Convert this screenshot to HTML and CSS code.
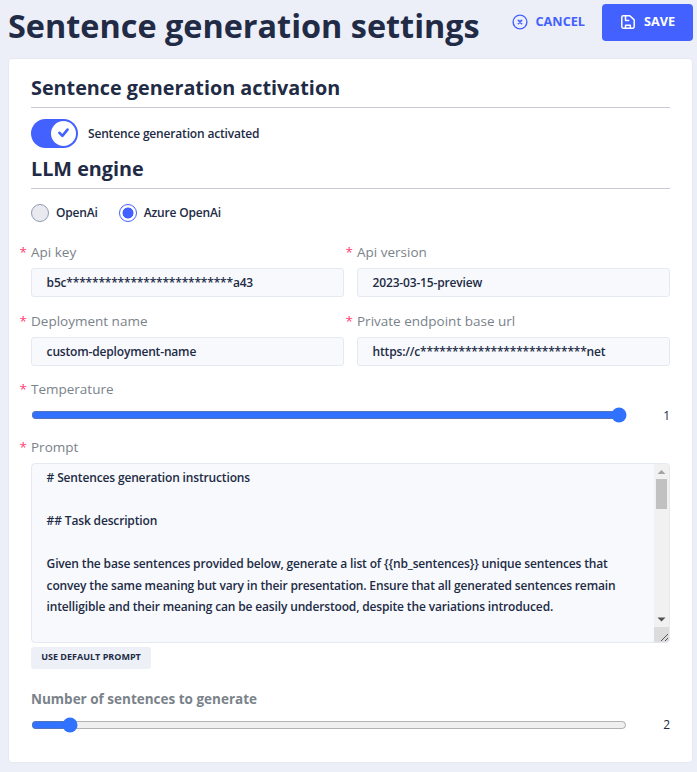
FILE: index.html
```html
<!DOCTYPE html>
<html lang="en">
<head>
<meta charset="utf-8">
<title>Sentence generation settings</title>
<link rel="stylesheet" href="styles.css">
</head>
<body>
<header class="page-header">
  <h1>Sentence generation settings</h1>
  <div class="actions">
    <button class="btn btn-cancel" type="button">
      <svg width="16" height="16" viewBox="0 0 16 16" fill="none" stroke="currentColor" stroke-width="1.4" stroke-linecap="round"><circle cx="8" cy="8" r="6.900"/><path d="M6.400 6.400l3.200 3.200M9.600 6.400L6.400 9.600" stroke-width="1.600"/></svg>
      <span>Cancel</span>
    </button>
    <button class="btn btn-save" type="button">
      <svg width="14" height="14" viewBox="0 0 14 14" fill="none" stroke="currentColor" stroke-width="1.5" stroke-linejoin="round" stroke-linecap="round"><path d="M2.200.8h6.600l4.400 4.100v6.900a1.400 1.400 0 0 1-1.400 1.400H2.200A1.400 1.400 0 0 1 .8 11.800V2.200A1.400 1.400 0 0 1 2.200.8z"/><path d="M4.500 1v4.500h3.200M4.500 13v-2.700h4.800V13"/></svg>
      <span>Save</span>
    </button>
  </div>
</header>
<main class="card">
  <h2>Sentence generation activation</h2>
  <div class="toggle-row">
    <span class="toggle"><span class="knob"><svg width="12" height="12" viewBox="0 0 12 12" fill="none" stroke="currentColor" stroke-width="2.600" stroke-linecap="round" stroke-linejoin="round"><path d="M1.500 4.800l2.900 3L9.500 1.600"/></svg></span></span>
    <span class="toggle-text">Sentence generation activated</span>
  </div>
  <h2 class="second">LLM engine</h2>
  <div class="radios">
    <label class="radio"><span class="dot"></span><span class="radio-text">OpenAi</span></label>
    <label class="radio"><span class="dot checked"></span><span class="radio-text">Azure OpenAi</span></label>
  </div>
  <div class="fields">
    <div class="field"><label class="label required">Api key</label><div class="input">b5c**************************a43</div></div>
    <div class="field"><label class="label required">Api version</label><div class="input">2023-03-15-preview</div></div>
    <div class="field"><label class="label required">Deployment name</label><div class="input">custom-deployment-name</div></div>
    <div class="field"><label class="label required">Private endpoint base url</label><div class="input">https://c**************************net</div></div>
  </div>
  <label class="label required temperature">Temperature</label>
  <div class="slider"><input type="range" min="0" max="1" step="0.1" value="1"><span class="value">1</span></div>
  <label class="label required prompt-label">Prompt</label>
  <div class="textarea">
    <div class="prompt-text"># Sentences generation instructions

## Task description

Given the base sentences provided below, generate a list of {{nb_sentences}} unique sentences that convey the same meaning but vary in their presentation. Ensure that all generated sentences remain intelligible and their meaning can be easily understood, despite the variations introduced.</div>
    <div class="scrollbar">
      <svg class="arrow" width="15" height="15" viewBox="0 0 15 15"><path d="M3.500 10L7.500 6l4 4z" fill="#a3a3a3"/></svg>
      <span class="thumb"></span>
      <svg class="arrow down" width="15" height="15" viewBox="0 0 15 15"><path d="M3.500 5.500l4 4 4-4z" fill="#505050"/></svg>
      <svg class="grip" width="15" height="15" viewBox="0 0 15 15" shape-rendering="crispEdges" stroke="#555" stroke-width="1"><path d="M7 14l7-7M11 14l3-3"/></svg>
    </div>
  </div>
  <button class="default-btn" type="button">Use default prompt</button>
  <label class="label strong">Number of sentences to generate</label>
  <div class="slider count"><input type="range" min="1" max="20" value="2"><span class="value">2</span></div>
</main>
</body>
</html>
```
FILE: styles.css
```css
* { box-sizing: border-box; }
body {
  margin: 0;
  height: 772px;
  overflow: hidden;
  padding: 4px 4px 0 8px;
  background: #eceff8;
  color: #222b45;
  font-family: "Open Sans", sans-serif;
  font-size: 12px;
  font-weight: 600;
  letter-spacing: -.17px;
}
button { font-family: inherit; border: 0; letter-spacing: 0; }
h1, h2 { margin: 0; font-weight: 700; letter-spacing: 0; }
h1 { font-size: 32.4px; line-height: 42px; white-space: nowrap; }
.page-header { display: flex; justify-content: space-between; height: 54px; }
.actions { display: flex; gap: 17px; height: 37px; }
.btn {
  display: flex;
  align-items: center;
  padding: 0;
  border-radius: 4px;
  background: transparent;
  font-size: 12.7px;
  font-weight: 700;
  text-transform: uppercase;
}
.btn svg { margin-top: -1px; }
.btn span { padding-bottom: 3px; }
.btn-cancel { gap: 7px; color: #4361ff; }
.btn-save { width: 91px; padding-left: 19px; gap: 9px; background: #4361ff; color: #fff; }
.card {
  width: 685px;
  height: 705px;
  padding: 17px 22px 0;
  background: #fff;
  border: 1px solid #e4e9f5;
  border-radius: 4px;
}
h2 { height: 32px; line-height: 24px; font-size: 19.8px; border-bottom: 1px solid #c8cbd5; }
.toggle-row { display: flex; align-items: center; gap: 10px; height: 29px; margin-top: 11px; }
.toggle { display: flex; justify-content: flex-end; width: 47px; height: 29px; padding: 2px; border-radius: 15px; background: #4361ff; }
.knob { display: flex; align-items: center; justify-content: center; width: 25px; height: 25px; border-radius: 50%; background: #fff; color: #4361ff; }
.second { margin-top: 9px; }
.radios { display: flex; gap: 21px; margin-top: 15px; height: 18px; }
.radio { display: flex; align-items: center; gap: 7px; }
.radio-text { padding-bottom: 2px; }
.dot { width: 18px; height: 18px; border: 1px solid #8f9bb3; border-radius: 50%; background: #e9eaef; }
.dot.checked { border-color: #4361ff; background: radial-gradient(circle, #4361ff 5.200px, #fff 5.800px); }
.fields { display: grid; grid-template-columns: 1fr 1fr; column-gap: 13px; row-gap: 13px; margin-top: 21px; }
.field { height: 56px; }
.label { display: block; height: 18px; line-height: 18px; font-size: 13.5px; font-weight: 400; letter-spacing: 0; color: #7a828a; }
.required { position: relative; }
.required::before { content: "*"; position: absolute; left: -11.5px; color: #ff3d71; }
.input {
  height: 29px;
  margin-top: 7px;
  padding-left: 14.6px;
  border: 1px solid #e4e9f2;
  border-radius: 3px;
  background: #f7f9fc;
  line-height: 27px;
}
.temperature { margin-top: 12px; }
.slider { display: flex; align-items: center; justify-content: space-between; height: 16px; margin-top: 9px; }
.slider input { width: 596px; height: 16px; margin: -1px 0 0; accent-color: #3071ff; }
.value { font-weight: 400; }
.count .value { padding-bottom: 2px; }
.prompt-label { margin-top: 15px; }
.textarea { display: flex; justify-content: space-between; height: 180px; margin-top: 7px; border: 1px solid #e4e9f2; border-radius: 4px; background: #f7f9fc; overflow: hidden; }
.prompt-text { width: 600px; padding: 3px 0 0 14.6px; line-height: 21.500px; letter-spacing: -.152px; white-space: pre-wrap; }
.scrollbar { display: flex; flex-direction: column; align-items: center; width: 15px; background: #f1f1f1; }
.arrow, .grip { flex: none; display: block; }
.thumb { width: 11px; height: 30px; background: #c1c1c1; }
.down { margin-top: auto; }
.grip { background: #dcdcdc; }
.default-btn { display: block; width: 120px; height: 22px; margin-top: 4px; padding: 0 0 3px; border-radius: 3px; background: #edf0f7; color: #222b45; font-size: 9px; font-weight: 700; text-transform: uppercase; }
.strong { margin-top: 21px; font-weight: 700; }
```
